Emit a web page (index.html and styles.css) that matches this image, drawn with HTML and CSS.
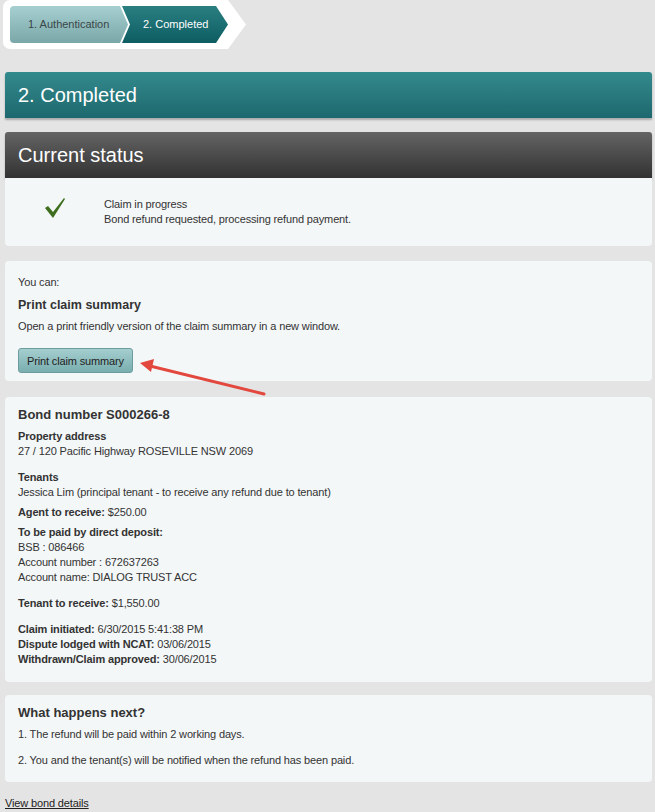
FILE: index.html
```html
<!DOCTYPE html>
<html lang="en">

<head>
    <meta charset="UTF-8">
    <title>Claim completed</title>
    <link rel="stylesheet" href="styles.css">
</head>

<body>
    <div class="page">
        <div class="crumbs">
            <span class="step step1">1. Authentication</span>
            <span class="step step2">2. Completed</span>
        </div>

        <h1 class="bar bar-teal">2. Completed</h1>

        <h2 class="bar bar-dark">Current status</h2>
        <div class="panel status">
            <svg class="tick" width="22" height="22" viewBox="0 0 22 22">
                <path d="M1 11 L4 9 L9 15 L20 1 L21 2 L9 21 Z" fill="#3e6f1e" />
            </svg>
            <div class="status-text">
                <p>Claim in progress</p>
                <p>Bond refund requested, processing refund payment.</p>
            </div>
        </div>

        <div class="panel actions">
            <p>You can:</p>
            <h3>Print claim summary</h3>
            <p>Open a print friendly version of the claim summary in a new window.</p>
            <button class="btn">Print claim summary</button>
        </div>

        <div class="panel bond">
            <h3>Bond number S000266-8</h3>
            <div class="group">
                <p><b>Property address</b></p>
                <p>27 / 120 Pacific Highway ROSEVILLE NSW 2069</p>
            </div>
            <div class="group tight">
                <p><b>Tenants</b></p>
                <p>Jessica Lim (principal tenant - to receive any refund due to tenant)</p>
            </div>
            <div class="group tight">
                <p><b>Agent to receive:</b> $250.00</p>
            </div>
            <div class="group">
                <p><b>To be paid by direct deposit:</b></p>
                <p>BSB : 086466</p>
                <p>Account number : 672637263</p>
                <p>Account name: DIALOG TRUST ACC</p>
            </div>
            <div class="group">
                <p><b>Tenant to receive:</b> $1,550.00</p>
            </div>
            <div class="group">
                <p><b>Claim initiated:</b> 6/30/2015 5:41:38 PM</p>
                <p><b>Dispute lodged with NCAT:</b> 03/06/2015</p>
                <p><b>Withdrawn/Claim approved:</b> 30/06/2015</p>
            </div>
        </div>

        <div class="panel next">
            <h3>What happens next?</h3>
            <p>1. The refund will be paid within 2 working days.</p>
            <p class="gap">2. You and the tenant(s) will be notified when the refund has been paid.</p>
        </div>

        <a class="link" href="#">View bond details</a>

        <!-- annotation arrow pointing at the print button -->
        <svg class="arrow" width="130" height="40" viewBox="0 0 130 40">
            <line x1="126" y1="36" x2="12" y2="8" stroke="#e2483e" stroke-width="3" stroke-linecap="round" />
            <path d="M2 5 L16 1 L13 14 Z" fill="#e2483e" />
        </svg>
    </div>
</body>

</html>
```

FILE: styles.css
```css
* {
    margin: 0;
    padding: 0;
}

body {
    background: #e4e4e4;
    font-family: "Liberation Sans", Arial, sans-serif;
    font-size: 11px;
    line-height: 15px;
    letter-spacing: -0.14px;
    color: #333;
}

.page {
    position: relative;
    padding: 0 3px 16px 5px;
}

/* breadcrumb */
.crumbs {
    position: relative;
    display: inline-flex;
    margin-left: -2px;
    padding: 6px 12px 6px 7px;
    background: #fff;
    border-radius: 7px 0 0 7px;
    letter-spacing: 0;
}

.crumbs::after {
    content: "";
    position: absolute;
    left: 100%;
    top: 0;
    width: 18px;
    height: 100%;
    background: #fff;
    clip-path: polygon(0 0, 100% 50%, 0 100%);
}

.step {
    position: relative;
    z-index: 1;
    display: flex;
    align-items: center;
    height: 37px;
}

.step1 {
    width: 100px;
    padding-left: 18px;
    color: #3a4648;
    background: linear-gradient(#a6cfd0, #7aa7a9);
    border-radius: 4px 0 0 4px;
    clip-path: polygon(0 0, calc(100% - 8px) 0, 100% 50%, calc(100% - 8px) 100%, 0 100%);
}

.step2 {
    width: 85px;
    margin-left: -6px;
    margin-right: -12px;
    padding-left: 21px;
    color: #fff;
    background: linear-gradient(#2a7f80, #0d5d63);
    clip-path: polygon(0 0, calc(100% - 12px) 0, 100% 50%, calc(100% - 12px) 100%, 0 100%, 8px 50%);
}

/* title bars */
.bar {
    height: 46px;
    line-height: 46px;
    padding-left: 13px;
    font-size: 20px;
    font-weight: normal;
    letter-spacing: 0;
    color: #fff;
    border-radius: 3px 3px 0 0;
    box-shadow: 0 2px 2px rgba(0, 0, 0, 0.25);
}

.bar-teal {
    margin-top: 23px;
    background: linear-gradient(#338a8c, #1d686e);
}

.bar-dark {
    margin-top: 14px;
    background: linear-gradient(#646464, #323232);
}

/* panels */
.panel {
    background: #f4f7f8;
    border-radius: 4px;
    padding: 0 13px;
}

.panel h3 {
    font-size: 12.5px;
    line-height: 16px;
    letter-spacing: 0;
    color: #333;
}

.status {
    display: flex;
    align-items: flex-start;
    padding: 19px 0;
    border-radius: 0 0 4px 4px;
}

.tick {
    margin: 0 38px 0 39px;
}

.actions {
    margin-top: 15px;
    padding-top: 14px;
    padding-bottom: 8px;
}

.actions h3 {
    margin: 7px 0 6px;
}

.btn {
    display: block;
    margin-top: 14px;
    width: 115px;
    height: 25px;
    font-family: inherit;
    font-size: 11px;
    letter-spacing: -0.14px;
    color: #222;
    background: linear-gradient(#a5cecf, #79aeaf);
    border: 1px solid #6c9c9d;
    border-radius: 3px;
}

.bond {
    margin-top: 16px;
    padding-top: 9px;
    padding-bottom: 15px;
}

.bond h3,
.next h3 {
    font-size: 13px;
    line-height: 17px;
}

.bond h3 {
    margin-bottom: 6px;
}

.group {
    margin-bottom: 11px;
}

.group.tight {
    margin-bottom: 5px;
}

.group:last-child {
    margin-bottom: 0;
}

.next {
    margin-top: 13px;
    padding-top: 9px;
    padding-bottom: 14px;
}

.next h3 {
    margin-bottom: 6px;
}

.next .gap {
    margin-top: 11px;
}

.link {
    display: inline-block;
    margin-top: 14px;
    color: #222;
}

.arrow {
    position: absolute;
    left: 138px;
    top: 358px;
}
```
